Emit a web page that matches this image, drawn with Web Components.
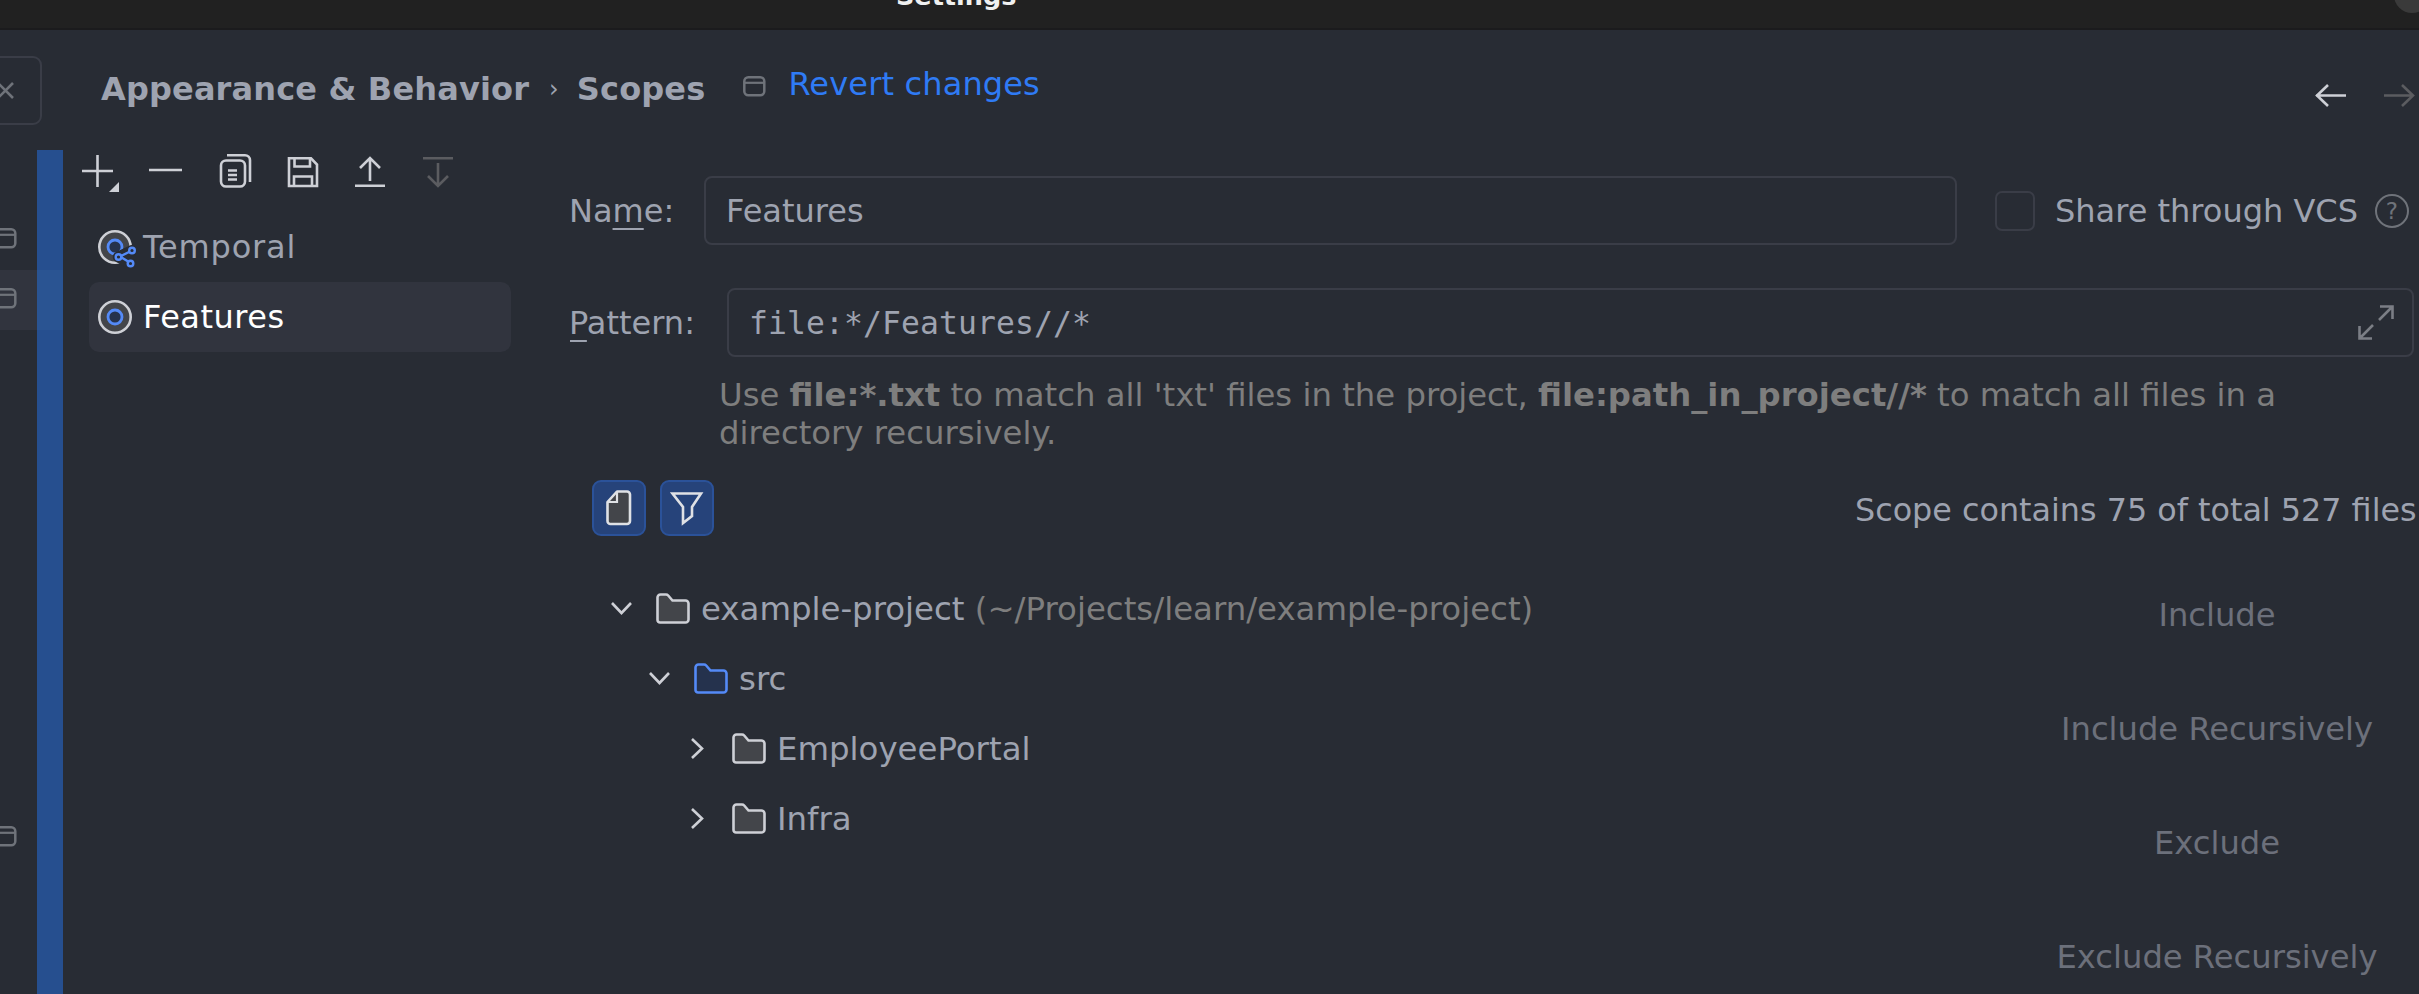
<!DOCTYPE html>
<html><head><meta charset="utf-8"><title>Settings</title>
<style>
html,body{margin:0;padding:0;height:994px;overflow:hidden;background:#282c34;}
body{font-family:"DejaVu Sans",sans-serif;font-size:32px;color:#9ea3b0;}
</style></head><body>
<x-window></x-window>
<script>
const FG='#ced0d6',DIM='#5b5c60',GR='#6f737a',BL='#548af7',FILL='#43454a',BF='#25324d',BG='#282c34';
const ICONS={
 plus:[36,44,`<path d="M2 21H33M17.5 5V37" stroke="${FG}" stroke-width="2.6" fill="none"/><path d="M39 32V42H29Z" fill="${FG}"/>`],
 minus:[36,44,`<path d="M1 20H34" stroke="${FG}" stroke-width="2.6"/>`],
 copy:[36,44,`<g fill="none" stroke="${FG}" stroke-width="2.6"><rect x="5" y="10.5" width="24" height="26" rx="5"/><path d="M11 5.3H29a5 5 0 0 1 5 5V32"/><path d="M12 20.5H21M12 25H21M12 29.5H21"/></g>`],
 save:[36,44,`<g fill="none" stroke="${FG}" stroke-width="2.6"><path d="M5 8.3H27L33 14.5V36H5Z"/><path d="M10.5 8.3V16.5H26V8.3M10 36V26.5H28V36"/></g>`],
 up:[36,44,`<g fill="none" stroke="${FG}" stroke-width="2.6"><path d="M3 35.7H33M18 31V8M8 18L18 8L28 18"/></g>`],
 down:[36,44,`<g fill="none" stroke="${DIM}" stroke-width="2.6"><path d="M3 8.3H33M18 13V36M8 26L18 36L28 26"/></g>`],
 win:[23,21,`<rect x="1.3" y="1.3" width="20" height="18" rx="4" fill="none" stroke="${GR}" stroke-width="2.5"/><path d="M1.5 6.8H21" stroke="${GR}" stroke-width="2.2"/>`],
 scope:[34,40,`<circle cx="17" cy="20" r="15.7" fill="${FILL}" stroke="${FG}" stroke-width="2.6"/><circle cx="17" cy="20" r="7" fill="${BF}" stroke="${BL}" stroke-width="2.8"/>`],
 temporal:[34,40,`<circle cx="17" cy="20" r="15.7" fill="${FILL}" stroke="${FG}" stroke-width="2.6"/><circle cx="17" cy="20" r="7" fill="${BF}" stroke="${BL}" stroke-width="2.8"/><path d="M34.7 23.3L20.3 30L32.7 36.7" fill="none" stroke="${BG}" stroke-width="11" stroke-linecap="round" stroke-linejoin="round"/><g fill="${BG}" stroke="${BL}" stroke-width="2.4"><path d="M33 24L22 29.5L31 35" fill="none"/><circle cx="34" cy="23.5" r="2.8"/><circle cx="20.5" cy="30" r="2.8"/><circle cx="32.5" cy="36.5" r="2.8"/></g>`],
 folder:[34,31,`<path d="M1.5 27V4.5a3 3 0 0 1 3-3h5.5a3 3 0 0 1 2.2 1L16.5 7.5H29.5a3 3 0 0 1 3 3V26.5a3 3 0 0 1-3 3H4a2.5 2.5 0 0 1-2.5-2.5Z" fill="${FILL}" stroke="${FG}" stroke-width="2.6"/>`],
 folderb:[34,31,`<path d="M1.5 27V4.5a3 3 0 0 1 3-3h5.5a3 3 0 0 1 2.2 1L16.5 7.5H29.5a3 3 0 0 1 3 3V26.5a3 3 0 0 1-3 3H4a2.5 2.5 0 0 1-2.5-2.5Z" fill="${BF}" stroke="${BL}" stroke-width="2.6"/>`],
 chevd:[30,20,`<path d="M6 5L15.5 15L25 5" fill="none" stroke="${FG}" stroke-width="2.6"/>`],
 chevr:[30,22,`<path d="M10 2L20 11.5L10 21" fill="none" stroke="${FG}" stroke-width="2.6"/>`],
 doc:[27,36,`<path d="M1.5 12L11 1.5H21a3 3 0 0 1 3 3V31a3 3 0 0 1-3 3H4.5a3 3 0 0 1-3-3Z" fill="${FILL}" stroke="#dfe1e5" stroke-width="2.6" stroke-linejoin="round"/><path d="M1.5 12H11V1.5" fill="none" stroke="#dfe1e5" stroke-width="2.2"/>`],
 filter:[32,32,`<path d="M1.5 1.5H30L21 15V24L12 31V15Z" fill="none" stroke="#dfe1e5" stroke-width="2.6"/>`],
 back:[32,24,`<path d="M1 11.5H31M13 1L2 11.5L13 22" fill="none" stroke="${FG}" stroke-width="2.6"/>`],
 fwd:[32,24,`<path d="M1 11.5H30M19 1L30 11.5L19 22" fill="none" stroke="${DIM}" stroke-width="2.6"/>`],
 expand:[38,37,`<g fill="none" stroke="#7b7e85" stroke-width="2.6"><path d="M23 2.5H35.5V15M35.5 2.5L22 16M2.5 22V34.5H15M2.5 34.5L16 21"/></g>`],
 close:[18,18,`<path d="M1 1L16 16M16 1L1 16" stroke="${GR}" stroke-width="2.6"/>`]
};
customElements.define('x-icon',class extends HTMLElement{
 static get observedAttributes(){return ['name'];}
 constructor(){super();this.attachShadow({mode:'open'});}
 attributeChangedCallback(){this.render();}
 render(){
  const d=ICONS[this.getAttribute('name')];
  if(!d)return;
  const [w,h,b]=d;
  this.shadowRoot.innerHTML=`<style>:host{display:inline-flex;flex:none;line-height:0}svg{overflow:visible;display:block}</style><svg width="${w}" height="${h}" viewBox="0 0 ${w} ${h}">${b}</svg>`;
 }
});
function def(name,css,html,init){
 customElements.define(name,class extends HTMLElement{
  constructor(){super();this.attachShadow({mode:'open'}).innerHTML=`<style>${css}</style>${html}`;}
  connectedCallback(){if(init)init(this);}
 });
}
def('x-titlebar',`:host{display:block;height:28px;background:#212121;border-bottom:2px solid #1b1b1d;overflow:hidden;position:relative}
 .t{font-weight:700;font-size:25.5px;color:#f0f0f0;line-height:30px;margin:-19px 0 0 896px;white-space:nowrap}
 .c{position:absolute;left:2394px;top:-23px;width:36px;height:36px;border-radius:50%;background:#3a3a3a}`,
 `<div class="t">Settings</div><div class="c"></div>`);
def('x-header',`:host{display:flex;height:120px;align-items:flex-start;white-space:nowrap}
 .stub{width:62px;height:69px;margin:26px 0 0 -20px;box-sizing:border-box;border:2px solid #3a3d47;border-radius:9px;display:flex;align-items:center;justify-content:flex-end;padding-right:25px;flex:none}
 .crumb{margin:38px 0 0 59px;font-weight:700;font-size:32px;line-height:42px;color:#9ea3b0;display:flex;align-items:center;letter-spacing:.15px}
 .sep{font-weight:400;font-size:24px;margin:0 18px 0 20px;color:#9ea3b0}
 .rv{display:flex;align-items:center;margin:33px 0 0 38px;color:#2f7bf5;font-size:32px;line-height:42px;letter-spacing:.15px}
 .rv x-icon{margin:4px 22px 0 0}
 .nav{margin:54px 0 0 auto;display:flex;gap:36px;padding-right:4px}`,
 `<div class="stub"><x-icon name="close"></x-icon></div>
  <div class="crumb"><span>Appearance &amp; Behavior</span><span class="sep">›</span><span>Scopes</span></div>
  <div class="rv"><x-icon name="win"></x-icon><span>Revert changes</span></div>
  <div class="nav"><x-icon name="back"></x-icon><x-icon name="fwd"></x-icon></div>`);
def('x-rail',`:host{display:flex;flex:none;width:63px;height:844px}
 .l{width:37px;padding-top:60px;box-sizing:border-box;overflow:hidden}
 .r{display:flex;align-items:center;height:60px;padding-bottom:3px;box-sizing:border-box}
 .r x-icon{margin-left:-6px}
 .r.s{background:#31343e}
 .r.last{margin-top:478px}
 .strip{width:26px;background:#264f8f;padding-top:120px;box-sizing:border-box}
 .h{height:60px;background:#2a5492}`,
 `<div class="l"><div class="r"><x-icon name="win"></x-icon></div><div class="r s"><x-icon name="win"></x-icon></div><div class="r last"><x-icon name="win"></x-icon></div></div>
  <div class="strip"><div class="h"></div></div>`);
def('x-scope-row',`:host{display:flex;align-items:center;height:70px;padding-left:9px;gap:11px;border-radius:10px;color:#9ea3b0}
 :host([selected]){background:#31343e;color:#fff}`,
 `<x-icon></x-icon><slot></slot>`,h=>{h.shadowRoot.querySelector('x-icon').setAttribute('name',h.getAttribute('icon'));});
def('x-scopes',`:host{display:block;flex:none;width:507px;box-sizing:border-box;padding-left:17px}
 .tb{display:flex;gap:32px;height:62px}
 .list{width:422px;margin-left:9px}
 .a{letter-spacing:.85px}.b{letter-spacing:.5px}`,
 `<div class="tb">${['plus','minus','copy','save','up','down'].map(n=>`<x-icon name="${n}"></x-icon>`).join('')}</div>
  <div class="list"><x-scope-row icon="temporal"><span class="a">Temporal</span></x-scope-row><x-scope-row icon="scope" selected><span class="b">Features</span></x-scope-row></div>`);
def('x-field',`:host{display:flex;align-items:center;box-sizing:border-box;height:69px;border:2px solid #3a3d47;border-radius:8px;padding-left:20px;min-width:0}
 .m{flex:1}`,`<slot></slot><div class="m"></div><slot name="end"></slot>`);
def('x-tool-btn',`:host{display:flex;align-items:center;justify-content:center;width:54px;height:56px;box-sizing:border-box;background:#26437a;border:2px solid #2b5299;border-radius:9px;flex:none}`,`<slot></slot>`);
def('x-tree-row',`:host{display:flex;align-items:center;height:70px;white-space:nowrap}
 .c{width:50px;flex:none;display:flex}
 .lbl{margin:2px 0 0 11px;color:#9ea3b0;font-size:32.4px}`,
 `<div class="c"><x-icon class="chev"></x-icon></div><x-icon class="f"></x-icon><div class="lbl"><slot></slot></div>`,h=>{
  const s=h.shadowRoot;
  s.querySelector('.chev').setAttribute('name',h.hasAttribute('open')?'chevd':'chevr');
  s.querySelector('.f').setAttribute('name',h.hasAttribute('src')?'folderb':'folder');
  h.style.paddingLeft=(36+38*(+h.getAttribute('level')))+'px';
 });
def('x-action',`:host{display:flex;align-items:center;justify-content:center;height:114px;color:#6c707b;white-space:nowrap;font-size:32.2px}`,`<slot></slot>`);
def('x-form',`:host{display:block;flex:1;min-width:0;padding:26px 5px 0 0;box-sizing:border-box;white-space:nowrap;color:#9ea3b0;overflow:hidden}
 u{text-decoration-thickness:2px;text-underline-offset:6px}
 .row{display:flex;align-items:center}
 .lab{flex:none;box-sizing:border-box}.n{width:134px}.p{width:157px}
 .lab span{margin-left:-1px;display:block}
 .pat{margin-top:43px}
 .mono{font-family:"DejaVu Sans Mono",monospace;font-size:31.4px;letter-spacing:.1px;color:#9ea3b0}
 .cb{width:40px;height:40px;box-sizing:border-box;border:2px solid #3a3d47;border-radius:7px;flex:none;margin:0 20px 0 38px}
 .q{width:34px;height:34px;box-sizing:border-box;border:2.5px solid ${GR};border-radius:50%;color:${GR};font-size:23px;display:flex;align-items:center;justify-content:center;margin-left:17px;flex:none}
 x-field.nf{width:1253px;flex:none}x-field.pf{flex:1}
 x-icon[slot=end]{margin-right:17px}
 .hint{margin:19px 0 0 149px;line-height:38px;color:#7e7e7e;font-size:32.3px}
 .btns{margin:28px 0 0 22px;gap:14px}
 .cnt{margin:2px 0 0 1127px;font-size:31.8px}
 .lower{display:flex;margin-top:37px}
 .tree{flex:1}
 .acts{width:352px;margin:-15px 21px 0 0;flex:none}
 .g{color:#7e7e7e}`,
 `<div class="row"><div class="lab n"><span>Na<u>m</u>e:</span></div><x-field class="nf">Features</x-field><div class="cb"></div><div>Share through VCS</div><div class="q">?</div></div>
  <div class="row pat"><div class="lab p"><span><u>P</u>attern:</span></div><x-field class="pf"><span class="mono">file:*/Features//*</span><x-icon slot="end" name="expand"></x-icon></x-field></div>
  <div class="hint">Use <b>file:*.txt</b> to match all 'txt' files in the project, <b>file:path_in_project//*</b> to match all files in a<br>directory recursively.</div>
  <div class="row btns"><x-tool-btn><x-icon name="doc"></x-icon></x-tool-btn><x-tool-btn><x-icon name="filter"></x-icon></x-tool-btn><div class="cnt">Scope contains 75 of total 527 files</div></div>
  <div class="lower"><div class="tree">
   <x-tree-row level="0" open>example-project <span class="g">(~/Projects/learn/example-project)</span></x-tree-row>
   <x-tree-row level="1" open src>src</x-tree-row>
   <x-tree-row level="2">EmployeePortal</x-tree-row>
   <x-tree-row level="2">Infra</x-tree-row>
  </div><div class="acts"><x-action>Include</x-action><x-action>Include Recursively</x-action><x-action>Exclude</x-action><x-action>Exclude Recursively</x-action></div></div>`);
def('x-window',`:host{display:block;width:2419px;height:994px;overflow:hidden;background:${BG}}
 .main{display:flex;height:844px}`,
 `<x-titlebar></x-titlebar><x-header></x-header><div class="main"><x-rail></x-rail><x-scopes></x-scopes><x-form></x-form></div>`);
</script>
</body></html>
